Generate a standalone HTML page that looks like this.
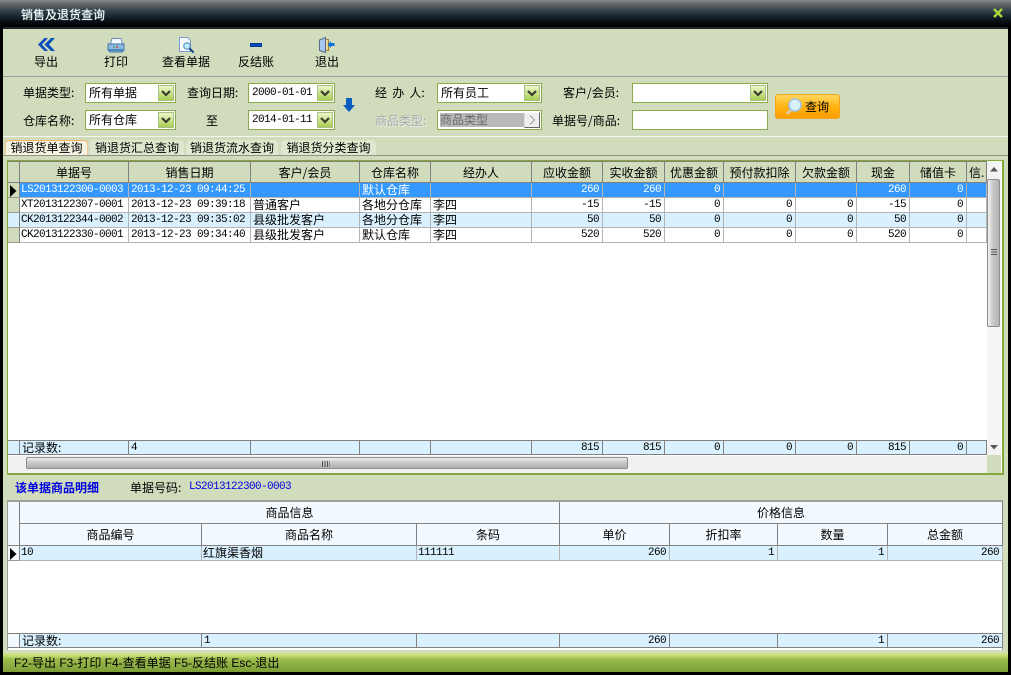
<!DOCTYPE html>
<html lang="zh"><head><meta charset="utf-8"><title>销售及退货查询</title>
<style>
html,body{margin:0;padding:0;width:1011px;height:675px;overflow:hidden;background:#000}
body{position:relative;font:12px/15px "WenQuanYi Zen Hei","Noto Sans CJK SC",sans-serif;color:#000}
.a{position:absolute}
.m{font:11px/14px "Liberation Mono",monospace;letter-spacing:-.6px}
.lb{position:absolute;white-space:nowrap;line-height:16px}
.f{position:absolute;box-sizing:border-box;height:20px;border:1px solid #8bab4b;background:#fff;line-height:18px;padding-left:3px;white-space:nowrap}
.dd{position:absolute;right:1px;top:1px;width:16px;height:16px;box-sizing:border-box;background:linear-gradient(#eef6cc,#a9cf50);border:1px solid #a9bf88}
.dd svg{position:absolute;left:2px;top:4px}
table{border-collapse:separate;border-spacing:0;table-layout:fixed;position:absolute}
td{box-sizing:border-box;padding:0 2px;height:15px;line-height:14px;border-right:1px solid #b4b4b4;border-bottom:1px solid #b4b4b4;white-space:nowrap;overflow:hidden}
.r{text-align:right;padding-right:3px}
.c{text-align:center}
.h td{height:22px;background:#d0dcbc;border-right:1px solid #808080;border-bottom:1px solid #808080;border-top:1px solid #808080;text-align:center;line-height:19px}
.h td.x{text-align:left}
.sel td{background:#3399ff;color:#fff}
.alt td{background:#d9f1fe}
.rh{background:#d0dcbc;border-right:1px solid #808080;border-bottom:1px solid #9a9a9a;padding:0}
.ft td{background:#d9f1fe;border-right:1px solid #808080;border-bottom:1px solid #808080;border-top:1px solid #808080;line-height:13px;vertical-align:top}
.ft td.m{line-height:12px;padding-top:1px}
.d td{background:#f3faff;border-color:#808080;text-align:center;height:22px;line-height:21px}
.tab{position:absolute;top:140px;height:15px;background:#dfe8cf;border-radius:4px 4px 0 0;line-height:16px;text-align:center;white-space:nowrap}
.ti{position:absolute;top:54px;width:70px;text-align:center;line-height:16px}
</style></head><body>
<!-- title bar -->
<div class="a" style="left:0;top:0;width:1011px;height:27px;background:linear-gradient(#8a8d90 0,#6a6e72 3px,#2c3a44 12px,#0c151b 20px,#000 26px)"></div>
<div class="a" style="left:3px;top:27px;width:1005px;height:2px;background:#1a262c"></div>
<div class="a" style="left:21px;top:7px;color:#fff;line-height:16px;text-shadow:0 0 1px #9cc">销售及退货查询</div>
<svg class="a" style="left:993px;top:8px" width="10" height="10" viewBox="0 0 10 10"><path d="M1 1L9 9M9 1L1 9" stroke="#a8d83c" stroke-width="2.400"/></svg>
<!-- main -->
<div class="a" style="left:3px;top:29px;width:1005px;height:624px;background:#d0dcbc"></div>
<div class="a" style="left:3px;top:76px;width:1005px;height:1px;background:#a0a0a0"></div>
<div class="a" style="left:3px;top:136px;width:1005px;height:1px;background:#f4f6ee"></div>
<div class="a" style="left:3px;top:155px;width:1005px;height:1px;background:#8f9488"></div>
<!-- toolbar -->
<svg class="a" style="left:37px;top:38px" width="18" height="13" viewBox="0 0 18 13"><path d="M7.500 0L1 6.500L7.500 13H11L5 6.500L11 0ZM14 0L7.500 6.500L14 13H18L12 6.500L18 0Z" fill="#0a50b8"/></svg>
<svg class="a" style="left:107px;top:38px" width="18" height="15" viewBox="0 0 18 15"><path d="M5 .5H14L15.500 6H3.500Z" fill="#f4f8ff" stroke="#6a90b8"/><path d="M1 6H17V12L15 14H3L1 12Z" fill="#8fb8e0" stroke="#3f74a8"/><path d="M2 11H16V13H2Z" fill="#4f86bc"/><path d="M6 9h2" stroke="#2ea02e"/><path d="M9 9h2" stroke="#d02020"/></svg>
<svg class="a" style="left:179px;top:37px" width="16" height="17" viewBox="0 0 16 17"><path d="M.5 .5H8.500L11.500 3.500V14.500H.5Z" fill="#f6f9ff" stroke="#7a9cd0"/><circle cx="8" cy="9" r="3.300" fill="#bfe8f8" stroke="#4a8ac0"/><path d="M10.500 11.500L14.500 15.500" stroke="#10408a" stroke-width="2"/></svg>
<div class="a" style="left:250px;top:43px;width:12px;height:4px;background:#0a50b8;box-shadow:inset 0 0 0 1px #053b90"></div>
<svg class="a" style="left:318px;top:37px" width="17" height="17" viewBox="0 0 17 17"><path d="M3 2.500H10.500V13.500H3Z" fill="#f0d890" stroke="#a08030"/><path d="M1.500 3L7.500 .5V15.500L1.500 13.500Z" fill="#a8c8f0" stroke="#5a6a8a"/><path d="M9.500 7.500L13 4V6H16.500V9H13V11Z" fill="#0a70e0"/></svg>
<div class="ti" style="left:11px">导出</div>
<div class="ti" style="left:81px">打印</div>
<div class="ti" style="left:151px">查看单据</div>
<div class="ti" style="left:221px">反结账</div>
<div class="ti" style="left:292px">退出</div>
<!-- filters -->
<div class="lb" style="left:23px;top:85px">单据类型:</div>
<div class="lb" style="left:23px;top:113px">仓库名称:</div>
<div class="lb" style="left:187px;top:85px">查询日期:</div>
<div class="lb" style="left:206px;top:113px">至</div>
<div class="lb" style="left:375px;top:85px;word-spacing:2.500px">经 办 人:</div>
<div class="lb" style="left:375px;top:113px;color:#a8a8a8;text-shadow:1px 1px 0 #eee">商品类型:</div>
<div class="lb" style="left:563px;top:85px">客户/会员:</div>
<div class="lb" style="left:552px;top:113px">单据号/商品:</div>
<div class="f" style="left:85px;top:83px;width:91px">所有单据<span class="dd"><svg width="10" height="7" viewBox="0 0 10 7"><path d="M1 1L5 5L9 1" fill="none" stroke="#3c3c30" stroke-width="2.200"/></svg></span></div>
<div class="f" style="left:85px;top:110px;width:91px">所有仓库<span class="dd"><svg width="10" height="7" viewBox="0 0 10 7"><path d="M1 1L5 5L9 1" fill="none" stroke="#3c3c30" stroke-width="2.200"/></svg></span></div>
<div class="f m" style="left:248px;top:83px;width:87px;line-height:18px">2000-01-01<span class="dd"><svg width="10" height="7" viewBox="0 0 10 7"><path d="M1 1L5 5L9 1" fill="none" stroke="#3c3c30" stroke-width="2.200"/></svg></span></div>
<div class="f m" style="left:248px;top:110px;width:87px;line-height:18px">2014-01-11<span class="dd"><svg width="10" height="7" viewBox="0 0 10 7"><path d="M1 1L5 5L9 1" fill="none" stroke="#3c3c30" stroke-width="2.200"/></svg></span></div>
<svg class="a" style="left:343px;top:98px" width="12" height="14" viewBox="0 0 12 14"><path d="M3 0H9V7H12L6 14L0 7H3Z" fill="#0a5cc0"/></svg>
<div class="f" style="left:437px;top:83px;width:105px">所有员工<span class="dd"><svg width="10" height="7" viewBox="0 0 10 7"><path d="M1 1L5 5L9 1" fill="none" stroke="#3c3c30" stroke-width="2.200"/></svg></span></div>
<div class="f" style="left:437px;top:110px;width:105px;padding-left:1px"><span class="a" style="left:2px;top:2px;width:84px;height:14px;background:#b8b8b8;color:#6a6a6a;line-height:14px;padding-left:0">商品类型</span><span class="a" style="right:1px;top:1px;width:16px;height:16px;box-sizing:border-box;background:#eee;border:1px solid;border-color:#fff #666 #666 #ddd;color:#888"><svg style="position:absolute;left:4px;top:2px" width="7" height="10" viewBox="0 0 7 10"><path d="M1 0.500L5.500 5L1 9.500" fill="none" stroke="#999"/></svg></span></div>
<div class="f" style="left:632px;top:83px;width:136px"><span class="dd"><svg width="10" height="7" viewBox="0 0 10 7"><path d="M1 1L5 5L9 1" fill="none" stroke="#3c3c30" stroke-width="2.200"/></svg></span></div>
<div class="f" style="left:632px;top:110px;width:136px"></div>
<div class="a" style="left:775px;top:94px;width:65px;height:25px;box-sizing:border-box;border:1px solid #f2a41a;border-radius:3px;background:linear-gradient(#ffd85e,#ffb414 50%,#ff9c00);line-height:24px;padding-left:29px">查询</div>
<svg class="a" style="left:784px;top:97px" width="20" height="20" viewBox="0 0 20 20"><path d="M8 12L3 17" stroke="#dcc8a8" stroke-width="3"/><circle cx="11" cy="8" r="6" fill="#d8f0fa" stroke="#9cc4e4" stroke-width="1.500"/></svg>
<!-- tabs -->
<div class="tab" style="left:5px;width:83px;background:#f6f3e4;box-shadow:inset 0 1px 0 #f2b45a,inset 1px 0 0 #f2c890,inset -1px 0 0 #f2c890">销退货单查询</div>
<div class="tab" style="left:90px;width:94px">销退货汇总查询</div>
<div class="tab" style="left:186px;width:92px">销退货流水查询</div>
<div class="tab" style="left:281px;width:95px">销退货分类查询</div>
<!-- top grid -->
<div class="a" style="left:7px;top:160px;width:997px;height:315px;box-sizing:border-box;border:1px solid #84a83c;border-width:1px 2px 2px 1px;background:#fff"></div>
<table style="left:8px;top:161px;width:979px">
<colgroup><col style="width:12px"><col style="width:109px"><col style="width:122px"><col style="width:109px"><col style="width:71px"><col style="width:101px"><col style="width:71px"><col style="width:62px"><col style="width:59px"><col style="width:72px"><col style="width:61px"><col style="width:53px"><col style="width:57px"><col style="width:20px"></colgroup>
<tr class="h"><td style="padding:0"></td><td>单据号</td><td>销售日期</td><td>客户/会员</td><td>仓库名称</td><td>经办人</td><td>应收金额</td><td>实收金额</td><td>优惠金额</td><td>预付款扣除</td><td>欠款金额</td><td>现金</td><td>储值卡</td><td class="x">信.</td></tr>
<tr class="sel"><td class="rh" style="background:#d0dcbc"><svg style="display:block;margin:1px 0 0 2px" width="7" height="12" viewBox="0 0 7 12"><path d="M0 0L6.500 6L0 12Z" fill="#000"/></svg></td><td class="m" style="padding-left:1px">LS2013122300-0003</td><td class="m">2013-12-23 09:44:25</td><td></td><td>默认仓库</td><td></td><td class="r m">260</td><td class="r m">260</td><td class="r m">0</td><td></td><td></td><td class="r m">260</td><td class="r m">0</td><td></td></tr>
<tr><td class="rh"></td><td class="m" style="padding-left:1px">XT2013122307-0001</td><td class="m">2013-12-23 09:39:18</td><td>普通客户</td><td>各地分仓库</td><td>李四</td><td class="r m">-15</td><td class="r m">-15</td><td class="r m">0</td><td class="r m">0</td><td class="r m">0</td><td class="r m">-15</td><td class="r m">0</td><td></td></tr>
<tr class="alt"><td class="rh"></td><td class="m" style="padding-left:1px">CK2013122344-0002</td><td class="m">2013-12-23 09:35:02</td><td>县级批发客户</td><td>各地分仓库</td><td>李四</td><td class="r m">50</td><td class="r m">50</td><td class="r m">0</td><td class="r m">0</td><td class="r m">0</td><td class="r m">50</td><td class="r m">0</td><td></td></tr>
<tr><td class="rh"></td><td class="m" style="padding-left:1px">CK2013122330-0001</td><td class="m">2013-12-23 09:34:40</td><td>县级批发客户</td><td>默认仓库</td><td>李四</td><td class="r m">520</td><td class="r m">520</td><td class="r m">0</td><td class="r m">0</td><td class="r m">0</td><td class="r m">520</td><td class="r m">0</td><td></td></tr>
</table>
<table style="left:8px;top:440px;width:979px">
<colgroup><col style="width:12px"><col style="width:109px"><col style="width:122px"><col style="width:109px"><col style="width:71px"><col style="width:101px"><col style="width:71px"><col style="width:62px"><col style="width:59px"><col style="width:72px"><col style="width:61px"><col style="width:53px"><col style="width:57px"><col style="width:20px"></colgroup>
<tr class="ft"><td class="rh" style="border-top:1px solid #808080"></td><td>记录数:</td><td class="m">4</td><td></td><td></td><td></td><td class="r m">815</td><td class="r m">815</td><td class="r m">0</td><td class="r m">0</td><td class="r m">0</td><td class="r m">815</td><td class="r m">0</td><td></td></tr>
</table>
<!-- vertical scrollbar -->
<div class="a" style="left:987px;top:161px;width:14px;height:294px;background:#f4f4f4"></div>
<svg class="a" style="left:990px;top:167px" width="8" height="5" viewBox="0 0 8 5"><path d="M4 0L8 4.500H0Z" fill="#555"/></svg>
<div class="a" style="left:987px;top:179px;width:13px;height:148px;box-sizing:border-box;border:1px solid #8e8e8e;border-radius:2px;background:linear-gradient(90deg,#f2f2f2,#c8c8c8 45%,#b4b4b4)"></div>
<div class="a" style="left:991px;top:249px;width:6px;height:6px;background:repeating-linear-gradient(#555 0 1px,transparent 1px 2.500px)"></div>
<svg class="a" style="left:990px;top:445px" width="8" height="5" viewBox="0 0 8 5"><path d="M4 4.500L8 0H0Z" fill="#555"/></svg>
<!-- horizontal scrollbar -->
<div class="a" style="left:8px;top:456px;width:979px;height:17px;background:#f0f0f0"></div>
<div class="a" style="left:26px;top:457px;width:602px;height:12px;box-sizing:border-box;border:1px solid #8e8e8e;border-radius:2px;background:linear-gradient(#f0f0f0,#c8c8c8 45%,#b0b0b0)"></div>
<div class="a" style="left:322px;top:461px;width:8px;height:6px;background:repeating-linear-gradient(90deg,#555 0 1px,transparent 1px 2.500px)"></div>
<div class="a" style="left:987px;top:455px;width:14px;height:18px;background:#d0dcbc"></div>
<!-- detail header -->
<div class="a" style="left:15px;top:480px;color:#0000e0;font-weight:bold;line-height:15px;white-space:nowrap">该单据商品明细</div>
<div class="a" style="left:130px;top:480px;line-height:15px">单据号码:</div>
<div class="a m" style="left:189px;top:480px;color:#0000e0;line-height:15px">LS2013122300-0003</div>
<!-- bottom grid -->
<div class="a" style="left:7px;top:500px;width:996px;height:150px;box-sizing:border-box;border-top:2px solid #a0a0a0;border-left:1px solid #a0a0a0;border-right:1px solid #a0a0a0;background:#fff"></div>
<table style="left:8px;top:502px;width:995px">
<colgroup><col style="width:12px"><col style="width:182px"><col style="width:215px"><col style="width:143px"><col style="width:110px"><col style="width:108px"><col style="width:110px"><col style="width:115px"></colgroup>
<tr class="d"><td rowspan="2" style="height:43px;padding:0"></td><td colspan="3">商品信息</td><td colspan="4">价格信息</td></tr>
<tr class="d"><td>商品编号</td><td>商品名称</td><td>条码</td><td>单价</td><td>折扣率</td><td>数量</td><td>总金额</td></tr>
<tr class="alt"><td class="rh" style="background:#f3faff"><svg style="display:block;margin:1px 0 0 2px" width="7" height="12" viewBox="0 0 7 12"><path d="M0 0L6.500 6L0 12Z" fill="#000"/></svg></td><td class="m" style="padding-left:1px">10</td><td style="padding-left:1px">红旗渠香烟</td><td class="m" style="padding-left:1px">111111</td><td class="r m">260</td><td class="r m">1</td><td class="r m">1</td><td class="r m">260</td></tr>
</table>
<table style="left:8px;top:633px;width:995px">
<colgroup><col style="width:12px"><col style="width:182px"><col style="width:215px"><col style="width:143px"><col style="width:110px"><col style="width:108px"><col style="width:110px"><col style="width:115px"></colgroup>
<tr class="ft"><td class="rh" style="background:#f3faff;border-top:1px solid #808080"></td><td>记录数:</td><td class="m">1</td><td></td><td class="r m">260</td><td></td><td class="r m">1</td><td class="r m">260</td></tr>
</table>
<!-- status bar -->
<div class="a" style="left:3px;top:653px;width:1005px;height:19px;background:linear-gradient(#d4e48a 0,#c4da72 3px,#9cbc4c 6px,#88aa3e 14px,#7c9e36)"></div>
<div class="a" style="left:14px;top:656px;line-height:15px;white-space:nowrap;font-family:'Liberation Sans','WenQuanYi Zen Hei',sans-serif">F2-导出 F3-打印 F4-查看单据 F5-反结账 Esc-退出</div>
</body></html>
